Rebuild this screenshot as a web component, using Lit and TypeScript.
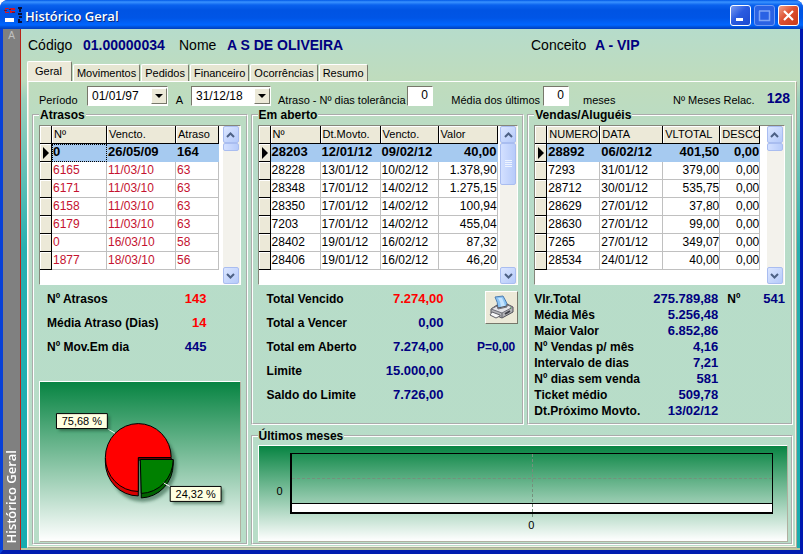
import { LitElement, html, css, svg } from "lit";
import { customElement, property } from "lit/decorators.js";

interface Column {
  label: string;
  width: number;
  right?: boolean;
}

@customElement("data-grid")
class DataGrid extends LitElement {
  @property({ attribute: false }) columns: Column[] = [];
  @property({ attribute: false }) rows: string[][] = [];
  @property({ type: Number }) thumb = 8;
  @property({ type: Boolean }) late = false;
  @property() name = "";

  static styles = css`
    :host {
      display: flex;
      justify-content: space-between;
      height: 158px;
      background: #fff;
      border: 1px solid;
      border-color: #85867a #fff #fff #85867a;
      overflow: hidden;
    }
    table {
      border-collapse: separate;
      border-spacing: 0;
      table-layout: fixed;
      width: 0;
      flex: none;
      align-self: flex-start;
      font-size: 12px;
      line-height: 16px;
      color: #000;
    }
    .mark-col { width: 12px; }
    tr { height: 18px; }
    th, td {
      box-sizing: border-box;
      height: 18px;
      padding: 0 0 1px 1px;
      text-align: left;
      white-space: nowrap;
      overflow: hidden;
      border-right: 1px solid #c0c0c0;
      border-bottom: 1px solid #c0c0c0;
    }
    th {
      font-size: 11px;
      font-weight: 400;
      padding-left: 2px;
      background: #ece9d8;
      border-color: #000;
      box-shadow: inset 1px 1px #fff;
    }
    .mark {
      padding: 0;
      background: #ece9d8;
      border-color: #000;
      box-shadow: inset 1px 1px #fff;
    }
    .mark svg { display: block; margin: 0 0 0 3px; }
    .right { text-align: right; padding-right: 0; }
    .late td { color: #c4122f; }
    .current td {
      color: #000;
      font-weight: 700;
      font-size: 13px;
      background: #a6caf0;
      border-color: #a6caf0;
    }
    .current .mark { background: #ece9d8; border-color: #000; }
    .current .focus { outline: 1px dotted #000; outline-offset: -1px; }
    .scroll {
      display: flex;
      flex-direction: column;
      width: 17px;
      flex: none;
      background: #f3f2ec;
    }
    .arrow, .thumb {
      box-sizing: border-box;
      width: 16px;
      padding: 0;
      border: 1px solid #a9bdf0;
      border-radius: 2px;
      background: linear-gradient(135deg, #dbe6ff, #b5cafa);
    }
    .arrow { height: 17px; display: grid; place-items: center; }
    .thumb { display: grid; place-items: center; background: linear-gradient(90deg, #d3e0ff, #b7cbfa); }
    .space { flex: 1; }
  `;

  render() {
    return html`
      <table aria-label=${this.name} class=${this.late ? "late" : ""}>
        <colgroup>
          <col class="mark-col" />
          ${this.columns.map((c) => html`<col style="width:${c.width}px" />`)}
        </colgroup>
        <thead>
          <tr><th></th>${this.columns.map((c) => html`<th scope="col">${c.label}</th>`)}</tr>
        </thead>
        <tbody>
          ${this.rows.map(
            (r, i) => html`<tr class=${i === 0 ? "current" : ""}>
              <td class="mark">
                ${i === 0 ? html`<svg width="7" height="12" viewBox="0 0 7 12"><path d="M0 0 L6 6 L0 12Z" /></svg>` : ""}
              </td>
              ${r.map(
                (v, j) => html`<td class="${this.columns[j].right ? "right" : ""} ${this.late && j === 0 ? "focus" : ""}">${v}</td>`
              )}
            </tr>`
          )}
        </tbody>
      </table>
      <div class="scroll">
        <button class="arrow" aria-label="Subir">
          <svg width="9" height="6" viewBox="0 0 9 6"><path d="M1 5 L4.500 1.500 L8 5" fill="none" stroke="#4d6185" stroke-width="2" /></svg>
        </button>
        <div class="thumb" style="height:${this.thumb}px">
          ${this.thumb > 20
            ? html`<svg width="7" height="8" viewBox="0 0 7 8"><path d="M0 .5H7M0 2.500H7M0 4.500H7M0 6.500H7" stroke="#eef4ff" /></svg>`
            : ""}
        </div>
        <div class="space"></div>
        <button class="arrow" aria-label="Descer">
          <svg width="9" height="6" viewBox="0 0 9 6"><path d="M1 1 L4.500 4.500 L8 1" fill="none" stroke="#4d6185" stroke-width="2" /></svg>
        </button>
      </div>
    `;
  }
}

const ATRASOS = [
  ["0", "26/05/09", "164"],
  ["6165", "11/03/10", "63"],
  ["6171", "11/03/10", "63"],
  ["6158", "11/03/10", "63"],
  ["6179", "11/03/10", "63"],
  ["0", "16/03/10", "58"],
  ["1877", "18/03/10", "56"],
];
const ABERTO = [
  ["28203", "12/01/12", "09/02/12", "40,00"],
  ["28228", "13/01/12", "10/02/12", "1.378,90"],
  ["28348", "17/01/12", "14/02/12", "1.275,15"],
  ["28350", "17/01/12", "14/02/12", "100,94"],
  ["7203", "17/01/12", "14/02/12", "455,04"],
  ["28402", "19/01/12", "16/02/12", "87,32"],
  ["28406", "19/01/12", "16/02/12", "46,20"],
];
const VENDAS = [
  ["28892", "06/02/12", "401,50", "0,00"],
  ["7293", "31/01/12", "379,00", "0,00"],
  ["28712", "30/01/12", "535,75", "0,00"],
  ["28629", "27/01/12", "37,80", "0,00"],
  ["28630", "27/01/12", "99,00", "0,00"],
  ["7265", "27/01/12", "349,07", "0,00"],
  ["28534", "24/01/12", "40,00", "0,00"],
];
const VENDAS_STATS = [
  ["Vlr.Total", "275.789,88"],
  ["Média Mês", "5.256,48"],
  ["Maior Valor", "6.852,86"],
  ["Nº Vendas p/ mês", "4,16"],
  ["Intervalo de dias", "7,21"],
  ["Nº dias sem venda", "581"],
  ["Ticket médio", "509,78"],
  ["Dt.Próximo Movto.", "13/02/12"],
];
const TABS = ["Geral", "Movimentos", "Pedidos", "Financeiro", "Ocorrências", "Resumo"];

@customElement("app-root")
class AppRoot extends LitElement {
  static styles = css`
    :host {
      display: block;
      font-family: "Liberation Sans", Arial, sans-serif;
      font-size: 11px;
      line-height: 14px;
      color: #000;
    }
    .window {
      display: flex;
      flex-direction: column;
      min-height: 100vh;
      box-sizing: border-box;
      border-radius: 8px 8px 0 0;
      overflow: hidden;
      background: #0831d9;
    }
    .title {
      display: flex;
      align-items: center;
      height: 29px;
      box-sizing: border-box;
      padding: 2px 4px 0 4px;
      gap: 3px;
      color: #fff;
      background: linear-gradient(#0058e6 0, #3a93ff 2px, #0a62ee 5px, #0054e3 10px, #0055e6 18px, #0066ff 25px, #0050d8 27px, #003fc0 29px);
    }
    .title h1 {
      flex: 1;
      margin: 0;
      font: 600 13px/18px "Open Sans", "Noto Sans", sans-serif;
      text-shadow: 1px 1px #0a2a80;
    }
    .ctl {
      width: 21px;
      height: 21px;
      padding: 0;
      border: 1px solid #fff;
      border-radius: 3px;
      background: linear-gradient(135deg, #7a9bf0, #2a5be0 45%, #1c4ad0);
      display: grid;
      place-items: center;
    }
    .ctl.dim { border-color: #6f9af5; background: #2a62e4; }
    .ctl.close { background: linear-gradient(135deg, #f0a088, #dd5030 45%, #c83a18); }
    .body {
      flex: 1;
      display: flex;
      border-left: 3px solid #0840d8;
      border-right: 3px solid #0018b0;
      border-bottom: 4px solid #001cb0;
      background: linear-gradient(#b6dccb 0, #bfdcbd 50px, #9cd0bc 70px, #28b0b0 220px, #18acb0);
    }
    .side {
      flex: none;
      width: 17px;
      display: flex;
      flex-direction: column;
      justify-content: space-between;
      align-items: center;
      background: #808080;
      border-right: 1px solid #b82418;
      padding-bottom: 6px;
      box-sizing: content-box;
    }
    .side .letter { font-size: 10px; color: #c0c0c0; }
    .side .vertical {
      writing-mode: vertical-rl;
      transform: rotate(180deg);
      font: 600 13px/17px "Open Sans", "Noto Sans", sans-serif;
      color: #fff;
    }
    .main { flex: 1; min-width: 0; padding: 0 3px 0 6px; display: flex; flex-direction: column; border-bottom: 2px solid #bcc8a0; }
    .head {
      display: grid;
      grid-template-columns: 55px 96px 48px 304px 64px 1fr;
      align-items: center;
      height: 32px;
      padding-left: 1px;
      font-size: 14px;
    }
    .head, .head dt, .head dd { margin: 0; }
    .head dd, .relac { font-weight: 700; color: #000080; font-size: 14px; }
    .tabs { display: flex; align-items: flex-end; height: 20px; gap: 1px; }
    .tab {
      height: 17px;
      box-sizing: border-box;
      padding: 0 3px;
      font: inherit;
      white-space: nowrap;
      color: #000;
      background: #e6e6d2;
      border: 1px solid;
      border-color: #fff #77776a transparent #fff;
      border-bottom: 0;
      border-radius: 2px 2px 0 0;
    }
    .tab.on { height: 20px; padding: 0 9px 2px 7px; background: #ece9d8; }
    .pane {
      flex: 1;
      display: flex;
      flex-direction: column;
      border: 1px solid;
      border-color: #fff #a9aa9a #a9aa9a #fff;
      box-shadow: inset -1px -1px #f4f4e4, inset 1px 0 #ece9d8;
      padding: 4px 3px 2px 4px;
      background: linear-gradient(#bfdcbd, #b7dcc9 80px, #b8ddc8);
    }
    .filters {
      display: grid;
      grid-template-columns: 48px 81px 23px 80px 136px 26px 110px 26px 1fr auto auto;
      align-items: end;
      height: 20px;
      padding: 0 3px 2px 7px;
    }
    .filters label, .filters span { line-height: 12px; white-space: nowrap; }
    .mid { text-align: center; }
    .filters .after { padding-left: 7px; }
    .filters .before { text-align: right; padding-right: 3px; }
    .filters .unit { padding-left: 14px; }
    .filters .relac { padding-left: 12px; line-height: 16px; }
    .combo {
      display: flex;
      position: relative;
      height: 20px;
      box-sizing: border-box;
      border: 1px solid;
      border-color: #77776a #fff #fff #77776a;
      background: #fff;
    }
    .combo select {
      appearance: none;
      flex: 1;
      min-width: 0;
      border: 0;
      padding: 0 0 0 4px;
      background: transparent;
      font: 12px/16px "Liberation Sans", Arial, sans-serif;
      color: #000;
    }
    .combo svg {
      position: absolute;
      right: 0;
      top: 1px;
      pointer-events: none;
      background: #ece9d8;
      border: 1px solid;
      border-color: #fff #77776a #77776a #fff;
    }
    .num {
      height: 20px;
      width: 26px;
      box-sizing: border-box;
      border: 1px solid;
      border-color: #77776a #fff #fff #77776a;
      padding: 0 4px 2px 0;
      text-align: right;
      font: 12px/16px "Liberation Sans", Arial, sans-serif;
    }
    .groups {
      flex: 1;
      display: grid;
      grid-template-columns: 215fr 273fr 265fr;
      grid-template-rows: auto 1fr;
      gap: 4px 3px;
    }
    fieldset {
      margin: 0;
      min-width: 0;
      border: 2px groove #fff;
      padding: 3px 5px 1px;
      display: flex;
      flex-direction: column;
    }
    legend { padding: 0 1px; font-weight: 700; font-size: 12px; line-height: 14px; }
    .tall { grid-row: span 2; padding-right: 5px; }
    .open { padding-bottom: 16px; padding-right: 4px; }
    .sales { padding-right: 6px; }
    .wide { grid-column: span 2; padding-right: 3px; padding-top: 2px; }
    .stats {
      margin: 2px 0 0;
      display: grid;
      grid-template-columns: auto auto;
      justify-content: space-between;
      font-size: 12px;
      line-height: 24px;
      font-weight: 700;
      white-space: nowrap;
    }
    .stats dt, .stats dd { margin: 0; }
    .stats dd { text-align: right; color: #000080; font-size: 13px; }
    .stats .alert { color: #f00; }
    .late-stats { padding: 0 34px 0 8px; }
    .split { display: flex; justify-content: space-between; }
    .open-stats { width: 177px; margin-left: 9px; }
    .open-side { display: flex; flex-direction: column; align-items: flex-end; padding-top: 6px; }
    .print {
      width: 33px;
      height: 33px;
      padding: 0;
      display: grid;
      place-items: center;
      background: #ece9d8;
      border: 1px solid;
      border-color: #fff #77776a #77776a #fff;
    }
    .p-value { margin: 11px 3px 0 0; font-size: 12px; line-height: 24px; font-weight: 700; color: #000080; }
    .sales-stats { width: 184px; line-height: 16px; margin-top: 6px; }
    .count { margin: 6px 0 0; flex: 1; display: flex; justify-content: space-between; padding-left: 9px; font-weight: 700; font-size: 12px; line-height: 16px; }
    .count dd { margin: 0; color: #000080; font-size: 13px; }
    .chart {
      background: linear-gradient(#078442, #fff);
      border: 1px solid;
      border-color: #fff #b0b0a0 #b0b0a0 #fff;
      box-sizing: border-box;
    }
    .pie { flex: 1; margin-top: 22px; display: flex; justify-content: center; align-items: flex-start; }
    .bars {
      display: grid;
      grid-template-columns: 31px 1fr;
      align-content: start;
      padding: 7px 14px 6px 0;
      min-height: 96px;
      flex: 1;
      font-size: 11px;
    }
    .y { align-self: end; padding: 0 7px 16px 0; text-align: right; }
    .plot {
      position: relative;
      box-sizing: border-box;
      height: 61px;
      border: 1px solid #000;
      border-left-width: 2px;
      border-bottom-width: 2px;
      display: flex;
      align-items: flex-end;
    }
    .floor { flex: 1; height: 8px; background: #fff; border-top: 1px solid #000; }
    .plot::before { content: ""; position: absolute; left: 0; right: 0; top: 24px; border-top: 1px dashed #74907c; }
    .plot::after { content: ""; position: absolute; left: 50%; top: 0; bottom: -5px; border-left: 1px dashed #74907c; }
    .x { grid-column: 2; text-align: center; padding-top: 4px; }
  `;

  private pie() {
    return svg`
      <svg width="200" height="158" viewBox="1 1 200 158" role="img" aria-label="75,68 % e 24,32 %">
        <defs>
          <filter id="blur" x="-20%" y="-20%" width="140%" height="140%"><feGaussianBlur stdDeviation="1.500" /></filter>
        </defs>
        <ellipse cx="104" cy="85" rx="34" ry="36" fill="#1c4c32" opacity=".5" filter="url(#blur)" />
        <path d="M66.500 77 V81 A33 34 0 0 0 99.500 115 V111 L99.500 77Z" fill="#d80000" stroke="#000" />
        <path d="M99.500 77 H132.500 V79 H99.500Z" fill="#d80000" stroke="#000" />
        <path d="M99.500 76.500 H132.500 A33 34 0 1 0 99.500 110.500Z" fill="#f00" stroke="#000" />
        <path d="M102.500 79 V117 A33 34 0 0 0 134.500 83 V79Z" fill="#006400" stroke="#000" />
        <path d="M101.500 78.500 H134.500 A33 34 0 0 1 102.500 112.500Z" fill="#008000" stroke="#000" />
        <path d="M69 48 L76 52 M125 102 L132 106" stroke="#fff" />
        <path d="M20 35 H71 V50 H20Z M134 108 H185 V123 H134Z" fill="#1c4c32" opacity=".55" filter="url(#blur)" />
        <path d="M17.500 32.500 H68.500 V47.500 H17.500Z M131.500 105.500 H182.500 V120.500 H131.500Z" fill="#ffffe1" stroke="#000" />
        <g font-size="11" text-anchor="middle">
          <text x="43" y="44">75,68 %</text>
          <text x="157" y="117">24,32 %</text>
        </g>
      </svg>`;
  }

  private combo(id: string, value: string) {
    return html`<div class="combo">
      <select id=${id}><option>${value}</option></select>
      <svg width="14" height="14" viewBox="0 0 14 14"><path d="M3 5H11L7 9Z" /></svg>
    </div>`;
  }

  render() {
    return html`
      <div class="window">
        <header class="title">
          <svg width="18" height="19" viewBox="0 0 18 19">
            <path d="M1 2h4v1h-3v3h3v1h-4zM6 2h5v2h-4v1h4v2h-5z" fill="#d01828" />
            <path d="M0 4.500h3M5 3.500h2M8 6.500h3" stroke="#601838" />
            <path d="M1 12h9v4H1z" fill="#fff" />
            <path d="M14 1h4v2h-4zM15 3h2v3h-2zM14 7h4v2h-4zM15 10h3v2h-3zM14 13h2v4h-2zM16 15h2v2h-2z" fill="#0a1038" />
          </svg>
          <h1>Histórico Geral</h1>
          <button class="ctl" aria-label="Minimizar">
            <svg width="15" height="15" viewBox="0 0 15 15"><path d="M3 10h7v3H3z" fill="#fff" /></svg>
          </button>
          <button class="ctl dim" aria-label="Maximizar">
            <svg width="15" height="15" viewBox="0 0 15 15"><path d="M2.500 3v9.500h10V3M2 3h11" fill="none" stroke="#7fa5f5" stroke-width="1.500" /></svg>
          </button>
          <button class="ctl close" aria-label="Fechar">
            <svg width="15" height="15" viewBox="0 0 15 15"><path d="M3 3l9 9M12 3l-9 9" stroke="#fff" stroke-width="2.200" /></svg>
          </button>
        </header>
        <div class="body">
          <aside class="side">
            <span class="letter">A</span>
            <span class="vertical">Histórico Geral</span>
          </aside>
          <main class="main">
            <dl class="head">
              <dt>Código</dt><dd>01.00000034</dd>
              <dt>Nome</dt><dd>A S DE OLIVEIRA</dd>
              <dt>Conceito</dt><dd>A - VIP</dd>
            </dl>
            <nav class="tabs" role="tablist">
              ${TABS.map((t, i) => html`<button role="tab" aria-selected=${i === 0} class="tab ${i === 0 ? "on" : ""}">${t}</button>`)}
            </nav>
            <section class="pane">
              <div class="filters">
                <label for="inicio">Período</label>
                ${this.combo("inicio", "01/01/97")}
                <label class="mid" for="fim">A</label>
                ${this.combo("fim", "31/12/18")}
                <label class="after" for="tolerancia">Atraso - Nº dias tolerância</label>
                <input class="num" id="tolerancia" value="0" />
                <label class="before" for="media">Média dos últimos</label>
                <input class="num" id="media" value="0" />
                <span class="unit">meses</span>
                <span>Nº Meses Relac.</span>
                <span class="relac">128</span>
              </div>
              <div class="groups">
                <fieldset class="tall">
                  <legend>Atrasos</legend>
                  <data-grid name="Atrasos" late .rows=${ATRASOS}
                    .columns=${[{ label: "Nº", width: 55 }, { label: "Vencto.", width: 69 }, { label: "Atraso", width: 43 }]}></data-grid>
                  <dl class="stats late-stats">
                    <dt>Nº Atrasos</dt><dd class="alert">143</dd>
                    <dt>Média Atraso (Dias)</dt><dd class="alert">14</dd>
                    <dt>Nº Mov.Em dia</dt><dd>445</dd>
                  </dl>
                  <div class="chart pie">${this.pie()}</div>
                </fieldset>
                <fieldset class="open">
                  <legend>Em aberto</legend>
                  <data-grid name="Em aberto" .rows=${ABERTO} .thumb=${42}
                    .columns=${[{ label: "Nº", width: 50 }, { label: "Dt.Movto.", width: 60 }, { label: "Vencto.", width: 58 }, { label: "Valor", width: 59, right: true }]}></data-grid>
                  <div class="split">
                    <dl class="stats open-stats">
                      <dt>Total Vencido</dt><dd class="alert">7.274,00</dd>
                      <dt>Total a Vencer</dt><dd>0,00</dd>
                      <dt>Total em Aberto</dt><dd>7.274,00</dd>
                      <dt>Limite</dt><dd>15.000,00</dd>
                      <dt>Saldo do Limite</dt><dd>7.726,00</dd>
                    </dl>
                    <div class="open-side">
                      <button class="print" aria-label="Imprimir">
                        <svg width="25" height="25" viewBox="0 0 25 25">
                          <path d="M6 2 L14 1 Q17 6 19 11 L9 14 Q9 7 6 2Z" fill="#8cc4f4" stroke="#4c7cb0" />
                          <path d="M9 3 L13 3 Q15 7 16 11 L12 12 Q12 7 9 3Z" fill="#c4e4ff" />
                          <path d="M2 14 L8 10 L9 13 L18 11 L18 9 L24 12 L24 17 L13 23 L2 18Z" fill="#b4b4b8" stroke="#505058" />
                          <path d="M2 14 L13 18 L24 12 L18 10 L18 12 L9 14 L8 11Z" fill="#e4e4e8" stroke="#707078" />
                          <path d="M13 18V22" stroke="#606068" />
                          <path d="M3 17 L11 20 L11 21 L7 23 L1 20Z" fill="#f8f8f8" stroke="#606068" />
                          <path d="M16 19 L21 16" stroke="#404048" stroke-width="2" />
                          <path d="M21 13h1" stroke="#30a040" />
                        </svg>
                      </button>
                      <div class="p-value">P=0,00</div>
                    </div>
                  </div>
                </fieldset>
                <fieldset class="sales">
                  <legend>Vendas/Aluguéis</legend>
                  <data-grid name="Vendas/Aluguéis" .rows=${VENDAS}
                    .columns=${[{ label: "NUMERO", width: 53 }, { label: "DATA", width: 63 }, { label: "VLTOTAL", width: 57, right: true }, { label: "DESCO", width: 40, right: true }]}></data-grid>
                  <div class="split">
                    <dl class="stats sales-stats">
                      ${VENDAS_STATS.map(([k, v]) => html`<dt>${k}</dt><dd>${v}</dd>`)}
                    </dl>
                    <dl class="count"><dt>Nº</dt><dd>541</dd></dl>
                  </div>
                </fieldset>
                <fieldset class="wide">
                  <legend>Últimos meses</legend>
                  <div class="chart bars">
                    <span class="y">0</span>
                    <div class="plot"><div class="floor"></div></div>
                    <span class="x">0</span>
                  </div>
                </fieldset>
              </div>
            </section>
          </main>
        </div>
      </div>
    `;
  }
}
